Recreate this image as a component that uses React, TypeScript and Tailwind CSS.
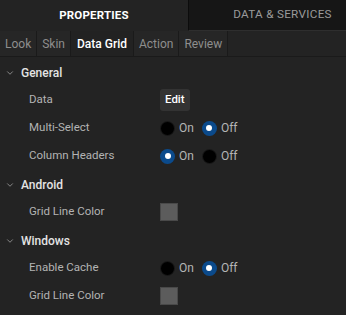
import { ChevronDown } from 'lucide-react';

type Row =
  | { label: string; kind: 'edit' }
  | { label: string; kind: 'radio'; on: boolean }
  | { label: string; kind: 'swatch' };

const sections: { title: string; rows: Row[] }[] = [
  {
    title: 'General',
    rows: [
      { label: 'Data', kind: 'edit' },
      { label: 'Multi-Select', kind: 'radio', on: false },
      { label: 'Column Headers', kind: 'radio', on: true },
    ],
  },
  {
    title: 'Android',
    rows: [{ label: 'Grid Line Color', kind: 'swatch' }],
  },
  {
    title: 'Windows',
    rows: [
      { label: 'Enable Cache', kind: 'radio', on: false },
      { label: 'Grid Line Color', kind: 'swatch' },
    ],
  },
];

const tabs = ['Look', 'Skin', 'Data Grid', 'Action', 'Review'];

const Radio = ({ checked, label }: { checked: boolean; label: string }) => (
  <div className="flex items-center gap-[4px]">
    {checked ? (
      <span className="w-[15px] h-[15px] rounded-full bg-[#0b4a8b] flex items-center justify-center">
        <span className="w-[6px] h-[6px] rounded-full bg-white" />
      </span>
    ) : (
      <span className="w-[15px] h-[15px] rounded-full bg-black border border-[#1a1a1a]" />
    )}
    <span className="text-[12px] text-[#b5b5b5]">{label}</span>
  </div>
);

export default function App() {
  return (
    <div className="w-[346px] h-[315px] bg-[#232323] overflow-hidden" style={{ fontFamily: 'Roboto, sans-serif' }}>
      {/* Top tabs */}
      <div className="flex h-[31px]">
        <div className="w-[188px] shrink-0 flex items-center justify-center bg-[#232323] text-[11.5px] font-bold text-white tracking-[0.2px]">
          PROPERTIES
        </div>
        <div className="w-[188px] shrink-0 flex items-center justify-center bg-[#161616] border-l border-[#0c0c0c] border-b border-b-[#2e2e2e] text-[11.7px] text-[#9a9a9a] tracking-[0.3px]">
          DATA &amp; SERVICES
        </div>
      </div>

      {/* Sub tabs */}
      <div className="flex h-[26px] bg-[#232323] border-b border-[#1a1a1a]">
        {tabs.map((t) => (
          <div
            key={t}
            className={
              t === 'Data Grid'
                ? 'px-[6px] flex items-center bg-[#222222] text-[12px] font-medium text-white border-r border-[#1a1a1a]'
                : 'px-[5px] flex items-center bg-[#262626] text-[12px] text-[#8e8e8e] border-r border-[#1a1a1a]'
            }
          >
            {t}
          </div>
        ))}
      </div>

      {/* Sections */}
      <div className="pt-[3px]">
        {sections.map((s) => (
          <div key={s.title} className="mb-[2px]">
            <div className="flex items-center h-[26px] pl-[5px] gap-[6px]">
              <ChevronDown className="w-[10px] h-[10px] text-[#9a9a9a]" strokeWidth={2} />
              <span className="text-[12px] font-medium text-[#e4e4e4]">{s.title}</span>
            </div>
            {s.rows.map((r, i) => (
              <div key={i} className="flex items-center h-[28px] pl-[29px]">
                <span className="w-[131px] shrink-0 text-[11.5px] text-[#b3b3b3]">{r.label}</span>
                {r.kind === 'edit' && (
                  <span className="h-[22px] px-[5px] flex items-center rounded-[3px] bg-[#333333] text-[11.5px] font-medium text-white">
                    Edit
                  </span>
                )}
                {r.kind === 'radio' && (
                  <div className="flex items-center gap-[8px]">
                    <Radio checked={r.on} label="On" />
                    <Radio checked={!r.on} label="Off" />
                  </div>
                )}
                {r.kind === 'swatch' && (
                  <span className="w-[18px] h-[18px] bg-[#5c5c5c] border border-[#494949]" />
                )}
              </div>
            ))}
          </div>
        ))}
      </div>
    </div>
  );
}
